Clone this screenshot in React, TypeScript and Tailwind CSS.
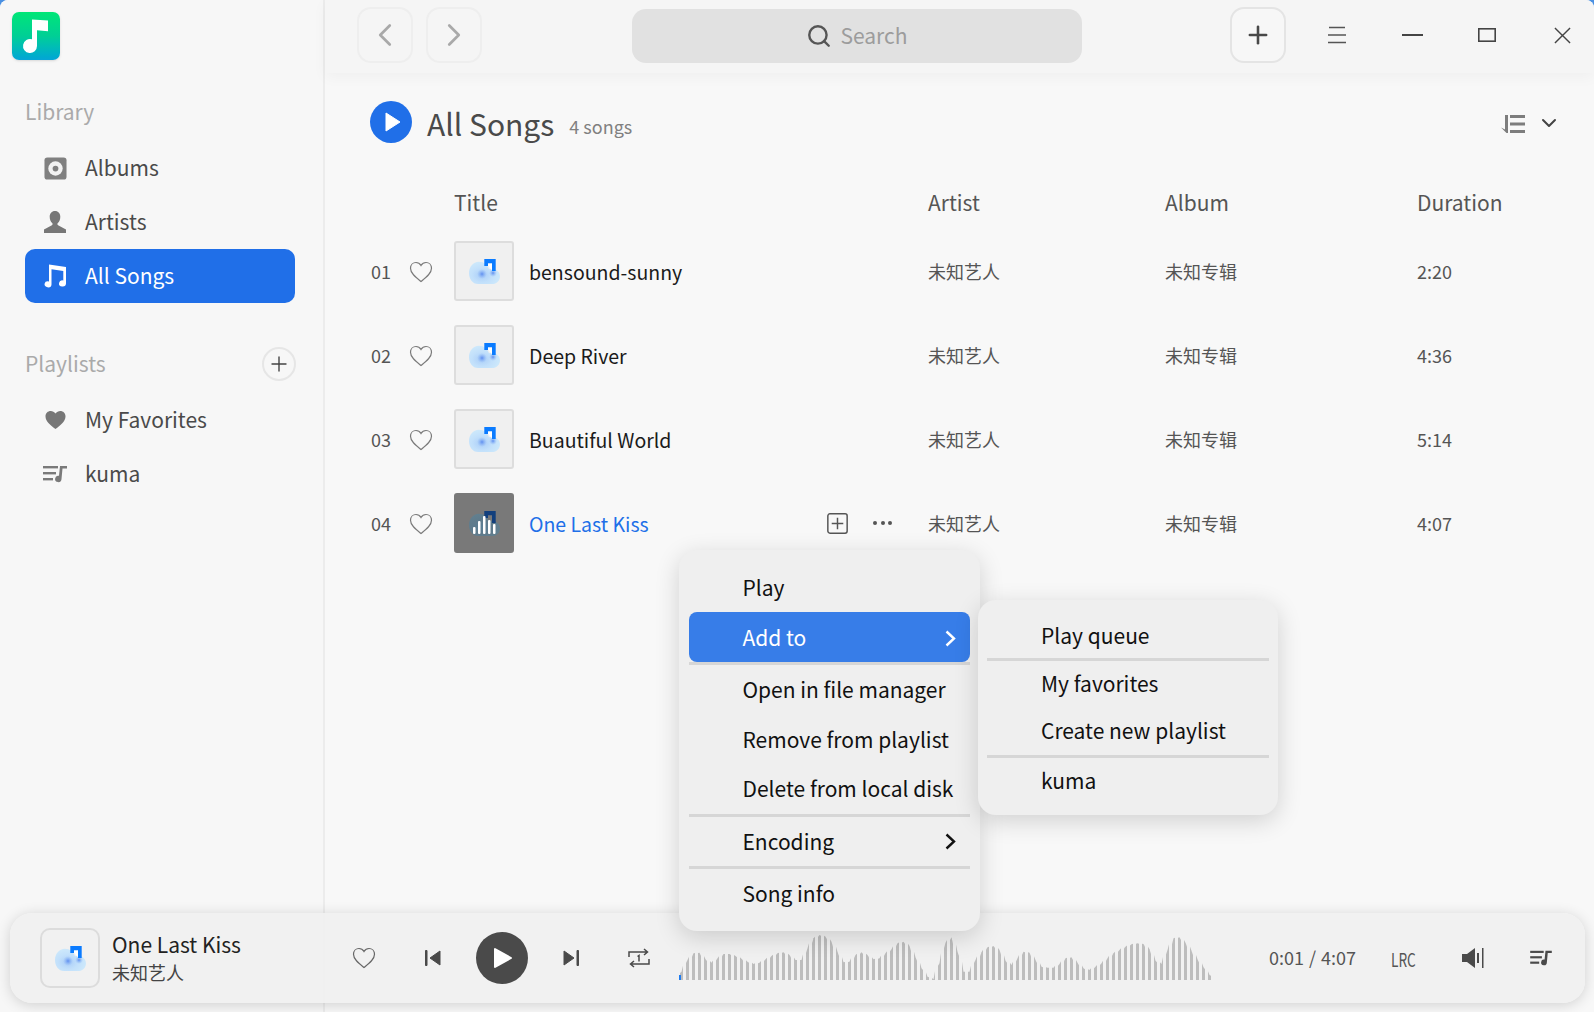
import { ChevronDown, ChevronLeft, ChevronRight, Plus, Search } from "lucide-react";

const songs = [
  { no: "01", title: "bensound-sunny", duration: "2:20" },
  { no: "02", title: "Deep River", duration: "4:36" },
  { no: "03", title: "Buautiful World", duration: "5:14" },
  { no: "04", title: "One Last Kiss", duration: "4:07", playing: true },
];

// bar tops read off the reference, in zoomed pixels (bottom = 180, 3x)
const waveTops = [
  155, 120, 100, 98, 118, 128, 115, 102, 102, 108, 116, 125, 132, 128, 118, 108, 100, 97, 105, 120,
  120, 85, 55, 45, 50, 65, 95, 127, 125, 105, 97, 105, 118, 115, 100, 88, 70, 65, 78, 112, 145, 170,
  178, 130, 68, 52, 95, 155, 155, 120, 97, 82, 78, 90, 122, 135, 115, 95, 98, 120, 140, 143, 143, 132,
  115, 112, 128, 145, 150, 140, 130, 115, 100, 90, 80, 73, 70, 72, 88, 122, 132, 90, 55, 52, 68, 92,
  118, 142, 165,
];

function CloudArt({ dark = false }: { dark?: boolean }) {
  const id = dark ? "cloud-dark" : "cloud-light";
  return (
    <svg viewBox="0 0 34 28" className="h-[28px] w-[34px]">
      <defs>
        <radialGradient id={id} cx="0.42" cy="0.6" r="0.65">
          <stop offset="0" stopColor={dark ? "#5b7f96" : "#a9cdf8"} />
          <stop offset="0.5" stopColor={dark ? "#5f7b8c" : "#c2e0fb"} />
          <stop offset="1" stopColor={dark ? "#62808f" : "#cfeafb"} />
        </radialGradient>
        <radialGradient id={id + "-spot"}>
          <stop offset="0" stopColor="#5f8ff0" />
          <stop offset="1" stopColor="#8fb8f5" stopOpacity="0" />
        </radialGradient>
      </defs>
      <path
        d="M12 4.700c5 0 8.500 3 10 7.500.8-.3 1.700-.5 2.700-.5 4.500 0 8.300 3.300 8.300 7.500 0 4.500-3.300 7.800-8 7.800H11C5.500 27 2 22 2 16S6 4.700 12 4.700z"
        fill={`url(#${id})`}
      />
      {!dark && (
        <>
          <circle cx="15" cy="17" r="5" fill={`url(#${id}-spot)`} />
          <circle cx="26" cy="16" r="4" fill={`url(#${id}-spot)`} />
          <path d="M19 6.300h6v7z" fill="#ffffff" />
        </>
      )}
      <path d="M17.300 2h11.400v12H25V6.300h-4V9h-3.700z" fill={dark ? "#123f7c" : "#0a7bff"} />
      {dark && (
        <g fill="#ffffff">
          <rect x="6" y="18" width="2.500" height="7" rx="1" />
          <rect x="11" y="12" width="2.500" height="13" rx="1" />
          <rect x="16" y="7" width="2.500" height="18" rx="1" />
          <rect x="21" y="11" width="2.500" height="14" rx="1" />
          <rect x="26" y="15" width="2.500" height="10" rx="1" />
        </g>
      )}
    </svg>
  );
}

function HeartOutline({ className }: { className: string }) {
  return (
    <svg viewBox="0 0 24 22" fill="none" stroke="currentColor" strokeWidth="1.200" className={className}>
      <path d="M12 20.500C7 16.500 1.500 12.500 1.500 7.300 1.500 3.800 4 1.500 7 1.500c2 0 3.800 1 5 3 1.200-2 3-3 5-3 3 0 5.500 2.300 5.500 5.800 0 5.200-5.500 9.200-10.500 13.200z" />
    </svg>
  );
}

function QueueIcon({ className }: { className: string }) {
  return (
    <svg viewBox="0 0 24 20" fill="currentColor" className={className}>
      <rect x="0" y="2" width="15" height="2.400" />
      <rect x="0" y="8" width="13" height="2.400" />
      <rect x="0" y="14" width="10" height="2.400" />
      <path d="M17 2h7v2.500h-4.500L18.500 15a3.200 3.200 0 1 1-2.500-3.200z" />
    </svg>
  );
}

function MenuArrow() {
  return (
    <svg viewBox="0 0 11 17" className="h-[17px] w-[11px]" fill="none" stroke="currentColor" strokeWidth="2.400">
      <path d="M1.500 1.500 9 8.500 1.500 15.500" />
    </svg>
  );
}

function NavItem({ icon, label, active = false }: { icon: React.ReactNode; label: string; active?: boolean }) {
  return (
    <div
      className={
        "ml-[25px] mr-[28px] flex h-[54px] items-center rounded-[10px] pl-[18px] text-[21px] " +
        (active ? "bg-[#206fe8] text-white" : "text-[#4a4a4a]")
      }
    >
      <span className="flex w-[24px] items-center justify-center">{icon}</span>
      <span className="ml-[18px]">{label}</span>
    </div>
  );
}

function Sidebar() {
  return (
    <aside className="flex w-[325px] shrink-0 flex-col border-r-2 border-[#ececec] bg-[#f7f7f7]">
      <div className="ml-[12px] mt-[12px] flex size-[48px] items-center justify-center rounded-[7px] bg-gradient-to-b from-[#00e676] via-[#00cf95] to-[#07a4d6] shadow-sm">
        <svg viewBox="0 0 30 36" className="h-[36px] w-[30px]" fill="#ffffff">
          <path d="M11 1.500 27 2.500v10.800l-11-1V28a7 7 0 1 1-5-6.700z" />
        </svg>
      </div>
      <div className="ml-[25px] mt-[37px] flex h-[30px] items-center text-[21px] text-[#aaaaaa]">Library</div>
      <div className="mt-[14px]">
        <NavItem
          label="Albums"
          icon={
            <svg viewBox="0 0 24 24" className="size-[23px]">
              <rect x="0.500" y="0.500" width="23" height="23" rx="3" fill="#808080" />
              <circle cx="12" cy="12" r="7.500" fill="#f2f2f2" />
              <circle cx="12" cy="12" r="3" fill="#808080" />
            </svg>
          }
        />
        <NavItem
          label="Artists"
          icon={
            <svg viewBox="0 0 24 24" className="size-[24px]" fill="#777777">
              <path d="M12 1c3.300 0 5.300 2.500 5.300 5.700 0 2.700-1 5-2.500 6.300-.6.600-.5 1.800.3 2.200L23 19.500V23H1v-3.500l7.900-4.300c.8-.4.900-1.600.3-2.200-1.500-1.300-2.500-3.600-2.500-6.300C6.700 3.500 8.700 1 12 1z" />
            </svg>
          }
        />
        <NavItem
          active
          label="All Songs"
          icon={
            <svg viewBox="0 0 24 26" className="h-[26px] w-[24px]" fill="#ffffff">
              <path d="M6 1.500 23 4v16.500a3.500 3 0 1 1-2.700-3V8L8.500 6.200V21.500a3.500 3 0 1 1-2.500-3z" />
            </svg>
          }
        />
      </div>
      <div className="ml-[25px] mr-[27px] mt-[43px] flex h-[36px] items-center justify-between text-[21px] text-[#aaaaaa]">
        <span>Playlists</span>
        <span className="flex size-[34px] items-center justify-center rounded-full border-2 border-[#e6e6e6]">
          <Plus size={24} strokeWidth={1.400} className="text-[#444444]" />
        </span>
      </div>
      <div className="mt-[11px]">
        <NavItem
          label="My Favorites"
          icon={
            <svg viewBox="0 0 22 20" className="h-[20px] w-[21px]" fill="#777777">
              <path d="M11 19.500C6 15.500.5 11.500.5 6 .5 2.800 3 .5 6 .5c2 0 3.800 1 5 2.800C12.200 1.500 14 .5 16 .5c3 0 5.500 2.300 5.500 5.500 0 5.500-5.500 9.500-10.500 13.500z" />
            </svg>
          }
        />
        <NavItem label="kuma" icon={<QueueIcon className="h-[20px] w-[24px] text-[#7a7a7a]" />} />
      </div>
    </aside>
  );
}

function Toolbar() {
  const squareButton = "flex h-[56px] w-[56px] items-center justify-center rounded-[14px] border-2";
  return (
    <header className="relative flex h-[73px] shrink-0 items-center bg-[#f5f5f5] pb-[3px] pl-[32px] shadow-[0_4px_14px_rgba(0,0,0,0.04)]">
      <div className={squareButton + " border-[#eeeeee]"}>
        <ChevronLeft size={38} strokeWidth={1.700} className="text-[#a9a9a9]" />
      </div>
      <div className={squareButton + " ml-[13px] border-[#eeeeee]"}>
        <ChevronRight size={38} strokeWidth={1.700} className="text-[#a9a9a9]" />
      </div>
      <div className="ml-[150px] mt-[1px] flex h-[54px] w-[450px] items-center justify-center rounded-[14px] bg-[#e1e1e1] text-[21px] text-[#9c9c9c]">
        <Search size={26} strokeWidth={2.200} className="mr-[8px] text-[#555555]" />
        Search
      </div>
      <div className={squareButton + " ml-[148px] border-[#e4e4e4] bg-[#f7f7f7]"}>
        <Plus size={28} strokeWidth={2.200} className="text-[#484848]" />
      </div>
      <div className="ml-[36px] flex w-[30px] justify-center">
        <svg viewBox="0 0 18 18" className="size-[18px]" stroke="#555555" strokeWidth="1.400">
          <path d="M1 1.500h16M0 9h18M0 16.500h18" />
        </svg>
      </div>
      <div className="ml-[45px] flex w-[30px] justify-center">
        <svg viewBox="0 0 21 2" className="h-[2px] w-[21px]" fill="#444444">
          <rect width="21" height="2" />
        </svg>
      </div>
      <div className="ml-[45px] flex w-[30px] justify-center">
        <svg viewBox="0 0 18 14" className="h-[14px] w-[18px]" fill="none" stroke="#444444" strokeWidth="1.600">
          <rect x="0.800" y="0.800" width="16.400" height="12.400" />
        </svg>
      </div>
      <div className="ml-[45px] flex w-[30px] justify-center">
        <svg viewBox="0 0 18 18" className="size-[17px]" stroke="#444444" strokeWidth="1.500">
          <path d="M1 1l16 16M17 1L1 17" />
        </svg>
      </div>
    </header>
  );
}

function SongRow({ song }: { song: (typeof songs)[number] }) {
  return (
    <div className="flex h-[84px] items-center pl-[46px]">
      <span className="w-[38px] text-[18px] text-[#555555]">{song.no}</span>
      <HeartOutline className="mt-[1px] h-[22px] w-[24px] text-[#7a7a7a]" />
      <div
        className={
          "ml-[21px] flex size-[60px] shrink-0 items-center justify-center rounded-[3px] border-2 " +
          (song.playing ? "border-[#797979] bg-[#797979]" : "border-[#dddddd] bg-[#f0f0f0]")
        }
      >
        <CloudArt dark={song.playing} />
      </div>
      <span
        className={
          "ml-[15px] mt-[2px] w-[292px] text-[19.5px] " + (song.playing ? "text-[#206fe8]" : "text-[#1b1b1b]")
        }
      >
        {song.title}
      </span>
      <div className="flex w-[107px] items-center pl-[6px]">
        {song.playing && (
          <>
            <svg viewBox="0 0 20 20" className="size-[21px]" fill="none" stroke="#555555" strokeWidth="1.400">
              <rect x="0.800" y="0.800" width="18.400" height="18.400" rx="2" />
              <path d="M10 4.500v11M4.500 10h11" />
            </svg>
            <span className="ml-[25px] flex gap-[3.500px]">
              <i className="size-[4px] rounded-full bg-[#555555]" />
              <i className="size-[4px] rounded-full bg-[#555555]" />
              <i className="size-[4px] rounded-full bg-[#555555]" />
            </span>
          </>
        )}
      </div>
      <span className="w-[237px] text-[18px] text-[#555555]">未知艺人</span>
      <span className="w-[252px] text-[18px] text-[#555555]">未知专辑</span>
      <span className="text-[18px] text-[#555555]">{song.duration}</span>
    </div>
  );
}

function MenuItem({
  label,
  active = false,
  arrow = false,
  tall = false,
}: {
  label: string;
  active?: boolean;
  arrow?: boolean;
  tall?: boolean;
}) {
  return (
    <div
      className={
        "flex items-center justify-between rounded-[8px] pl-[53.500px] pr-[14px] text-[21px] " +
        (tall ? "h-[50px] pt-[2px] " : "h-[49.500px] ") +
        (active ? "bg-[#377de8] text-white" : "text-[#111111]")
      }
    >
      <span>{label}</span>
      {arrow && <MenuArrow />}
    </div>
  );
}

function ContextMenu() {
  return (
    <div className="absolute left-[679px] top-[550px] h-[381px] w-[301px] rounded-[18px] bg-[#efefef] px-[10px] pt-[12px] shadow-[0_6px_24px_rgba(0,0,0,0.16)]">
      <MenuItem label="Play" tall />
      <MenuItem label="Add to" active arrow tall />
      <div className="h-[3px] bg-[#d6d6d6]" />
      <MenuItem label="Open in file manager" />
      <MenuItem label="Remove from playlist" />
      <MenuItem label="Delete from local disk" />
      <div className="h-[3px] bg-[#d6d6d6]" />
      <MenuItem label="Encoding" arrow />
      <div className="h-[3px] bg-[#d6d6d6]" />
      <MenuItem label="Song info" />
    </div>
  );
}

function SubMenu() {
  const itemClass = "flex h-[47px] items-center pb-[2px] pl-[54px] text-[21px] text-[#111111]";
  return (
    <div className="absolute left-[978px] top-[600px] w-[300px] rounded-[18px] bg-[#efefef] px-[9px] pb-[10px] pt-[13px] shadow-[0_6px_24px_rgba(0,0,0,0.16)]">
      <div className="flex h-[45px] items-center pl-[54px] text-[21px] text-[#111111]">Play queue</div>
      <div className="h-[3px] bg-[#d6d6d6]" />
      <div className={itemClass}>My favorites</div>
      <div className={itemClass}>Create new playlist</div>
      <div className="h-[3px] bg-[#d6d6d6]" />
      <div className={itemClass}>kuma</div>
    </div>
  );
}

function Waveform() {
  const heights = waveTops.map((top) => (180 - top) / 3);
  return (
    <svg viewBox="0 0 534 46" className="h-[46px] w-[534px]">
      {heights.map((h, i) => {
        const x = i * 6 + 1;
        const left = (h + (heights[i - 1] ?? 0)) / 2;
        const right = (h + (heights[i + 1] ?? 0)) / 2;
        const y = (v: number) => 46 - Math.max(v, h * 0.85);
        return (
          <polygon
            key={i}
            points={`${x},46 ${x},${y(left)} ${x + 1.500},${46 - h} ${x + 3},${y(right)} ${x + 3},46`}
            fill="#bdbdbd"
          />
        );
      })}
      <rect x="0" y="41" width="2" height="5" fill="#1f7cf0" />
    </svg>
  );
}

function Player() {
  return (
    <div className="absolute left-[10px] top-[913px] flex h-[90px] w-[1575px] items-center rounded-[22px] bg-[#f0f0f0]/95 pl-[30px] shadow-[0_2px_14px_rgba(0,0,0,0.16)]">
      <div className="flex size-[60px] shrink-0 items-center justify-center rounded-[10px] border-2 border-[#dcdcdc]">
        <CloudArt />
      </div>
      <div className="ml-[12px] w-[240px]">
        <div className="text-[21px] leading-[28px] text-[#222222]">One Last Kiss</div>
        <div className="text-[18px] leading-[28px] text-[#444444]">未知艺人</div>
      </div>
      <HeartOutline className="h-[22px] w-[24px] text-[#666666]" />
      <svg viewBox="0 0 16 16" className="ml-[49px] size-[16px]" fill="#4a4a4a" stroke="#4a4a4a" strokeLinejoin="round">
        <rect x="0.500" y="0.500" width="1.500" height="15" />
        <path d="M15 1v14L5 8z" />
      </svg>
      <div className="ml-[35px] flex size-[52px] items-center justify-center rounded-full bg-[#4a4a4a]">
        <svg viewBox="0 0 20 22" className="ml-[2px] h-[22px] w-[20px]" fill="#ffffff" stroke="#ffffff" strokeWidth="2" strokeLinejoin="round">
          <path d="M2 2v18l16-9z" />
        </svg>
      </div>
      <svg viewBox="0 0 16 16" className="ml-[35px] size-[16px]" fill="#4a4a4a" stroke="#4a4a4a" strokeLinejoin="round">
        <rect x="14" y="0.500" width="1.500" height="15" />
        <path d="M1 1v14l10-7z" />
      </svg>
      <svg viewBox="0 0 22 22" className="ml-[49px] size-[22px]" fill="none" stroke="#4a4a4a" strokeWidth="1.500">
        <path d="M1 10V5h18M16 2l3.500 3-3.500 3M21 12v5H3M6 14l-3.500 3L6 20" />
        <path d="M9.500 9.500 11 8.500v6" />
      </svg>
      <div className="mb-[2px] ml-[29px] flex">
        <Waveform />
      </div>
      <span className="mb-[2px] ml-[56px] whitespace-nowrap text-[18px] [word-spacing:1px] text-[#555555]">0:01 / 4:07</span>
      <span className="ml-[35px] mt-[2px] w-[33px] origin-left scale-x-[0.72] whitespace-nowrap text-[19px] text-[#555555]">LRC</span>
      <svg viewBox="0 0 22 20" className="ml-[38px] h-[20px] w-[22px]" fill="#4a4a4a">
        <path d="M0 6h5l8-6v20l-8-6H0z" />
        <rect x="15" y="5" width="2" height="10" />
        <rect x="20" y="0" width="1.500" height="20" />
      </svg>
      <QueueIcon className="ml-[46px] h-[18px] w-[22px] text-[#4a4a4a]" />
    </div>
  );
}

export default function App() {
  return (
    <div className="relative h-[1012px] w-[1594px] overflow-hidden bg-[#4a90e2] font-['Noto_Sans_CJK_SC',sans-serif]">
      <div className="flex h-full w-full overflow-hidden rounded-t-[8px] bg-[#f8f8f8]">
        <Sidebar />
        <main className="flex min-w-0 flex-1 flex-col">
          <Toolbar />
          <div className="ml-[45px] mr-[33px] mt-[28px] flex h-[42px] items-center">
            <span className="flex size-[42px] items-center justify-center rounded-full bg-[#206fe8]">
              <svg viewBox="0 0 16 20" className="ml-[3px] h-[20px] w-[16px]" fill="#ffffff" stroke="#ffffff" strokeLinejoin="round">
                <path d="M1 1v18l14-9z" />
              </svg>
            </span>
            <span className="ml-[15px] mt-[3px] text-[30px] text-[#4a4a4a]">All Songs</span>
            <span className="ml-[15px] mt-[9px] text-[18px] text-[#808080]">4 songs</span>
            <svg viewBox="0 0 24 18" className="ml-auto mt-[3px] h-[18px] w-[24px]" fill="#7d7d7d">
              <rect x="9" y="0" width="15" height="3" />
              <rect x="9" y="7.500" width="15" height="3" />
              <rect x="9" y="15" width="15" height="3" />
              <path d="M4 0h3v18H5.500L0 12.500l4 2z" />
            </svg>
            <ChevronDown size={24} strokeWidth={2} className="ml-[12px] mt-[2px] text-[#444444]" />
          </div>
          <div className="mt-[45px] flex h-[30px] items-center pl-[129px] text-[21px] text-[#555555]">
            <span className="w-[474px]">Title</span>
            <span className="w-[237px]">Artist</span>
            <span className="w-[252px]">Album</span>
            <span>Duration</span>
          </div>
          <div className="mt-[11px]">
            {songs.map((song) => (
              <SongRow key={song.no} song={song} />
            ))}
          </div>
        </main>
      </div>
      <Player />
      <ContextMenu />
      <SubMenu />
    </div>
  );
}
